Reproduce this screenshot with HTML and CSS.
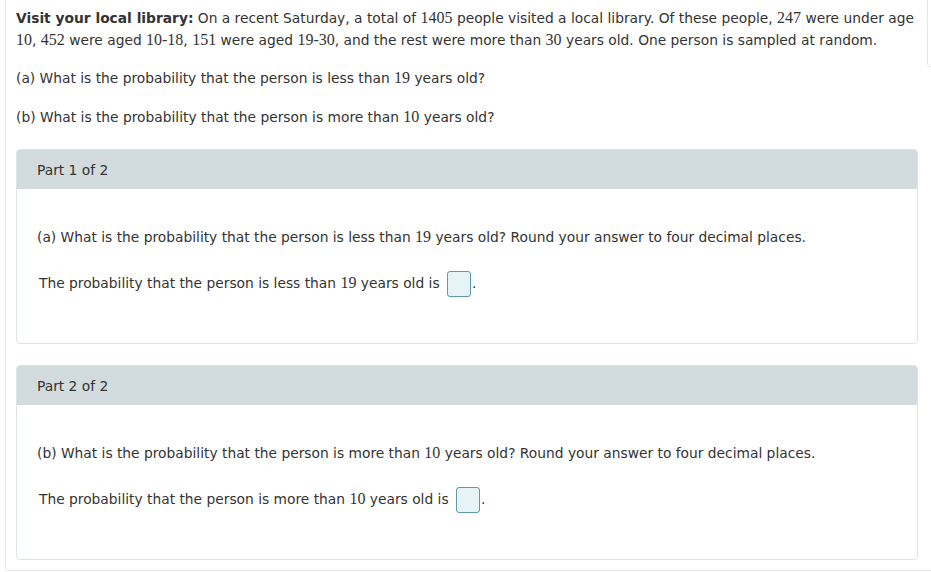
FILE: index.html
```html
<!DOCTYPE html>
<html>
<head>
<meta charset="utf-8">
<link rel="stylesheet" href="styles.css">
</head>
<body>
<div class="page">
  <p class="intro"><b>Visit your local library:</b> On a recent Saturday, a total of <span class="n">1405</span> people visited a local library. Of these people, <span class="n">247</span> were under age<br><span class="n">10</span>, <span class="n">452</span> were aged <span class="n">10-18</span>, <span class="n">151</span> were aged <span class="n">19-30</span>, and the rest were more than <span class="n">30</span> years old. One person is sampled at random.</p>
  <p class="q">(a) What is the probability that the person is less than <span class="n">19</span> years old?</p>
  <p class="q qb">(b) What is the probability that the person is more than <span class="n">10</span> years old?</p>

  <section class="part">
    <div class="part-head">Part 1 of 2</div>
    <div class="part-body">
      <p class="pq">(a) What is the probability that the person is less than <span class="n">19</span> years old? Round your answer to four decimal places.</p>
      <p class="ans">The probability that the person is less than <span class="n">19</span> years old is <span class="box"></span>.</p>
    </div>
  </section>

  <section class="part">
    <div class="part-head">Part 2 of 2</div>
    <div class="part-body">
      <p class="pq">(b) What is the probability that the person is more than <span class="n">10</span> years old? Round your answer to four decimal places.</p>
      <p class="ans">The probability that the person is more than <span class="n">10</span> years old is <span class="box"></span>.</p>
    </div>
  </section>
</div>
<div class="side"></div>
</body>
</html>
```
FILE: styles.css
```css
html, body {
  margin: 0;
  padding: 0;
  overflow: hidden;
  background: #fff;
}
body {
  font-family: "DejaVu Sans", Verdana, sans-serif;
  font-size: 13.8px;
  color: #333;
  width: 931px;
  height: 572px;
  position: relative;
}
.page {
  margin-left: 5px;
  width: 960px;
  box-sizing: border-box;
  border: 1px solid #e3e8ea;
  border-top: 0;
  border-radius: 0 0 4px 4px;
  padding: 7px 0 10px 10px;
}
p {
  margin: 0;
  line-height: 22px;
  height: 22px;
  white-space: nowrap;
}
.intro {
  height: auto;
}
.n {
  font-family: "Liberation Serif", "Times New Roman", serif;
  font-size: 16px;
  line-height: 1;
}
.q {
  margin-top: 16px;
}
.qb {
  margin-top: 17px;
}
.part {
  margin-top: 21px;
  width: 902px;
  box-sizing: border-box;
  border: 1px solid #dde4e6;
  border-radius: 4px;
  overflow: hidden;
}
.part-head {
  background: #d2dbde;
  height: 39px;
  line-height: 40px;
  padding-left: 20px;
}
.part-body {
  padding: 37px 0 0 20px;
  height: 154px;
  box-sizing: border-box;
}
.ans {
  margin-top: 24px;
  padding-left: 2px;
}
.box {
  display: inline-block;
  box-sizing: border-box;
  width: 24px;
  height: 26px;
  border: 1px solid #5b9aa8;
  border-radius: 3px;
  background: #e6f3f7;
  vertical-align: middle;
  margin: -4px 1px -4px 3px;
}
.side {
  position: absolute;
  left: 927px;
  top: -5px;
  width: 20px;
  height: 70px;
  border: 1px solid #e3e8ea;
  border-radius: 4px;
}
```
